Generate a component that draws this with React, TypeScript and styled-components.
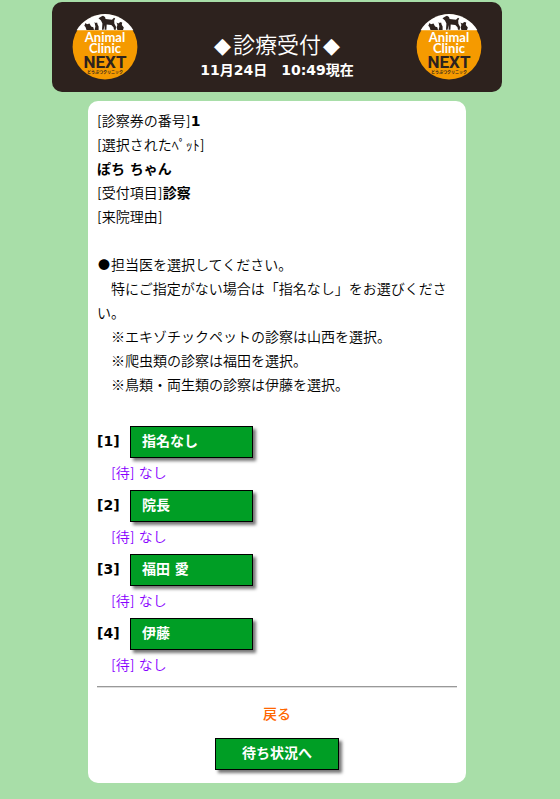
import React from "react";
import styled, { createGlobalStyle } from "styled-components";

const GlobalStyle = createGlobalStyle`
  body {
    margin: 0;
    padding: 2px 6px 16px 0;
    background: #a8dea8;
    color: #000;
    font-family: "DejaVu Sans", "Noto Sans CJK JP", sans-serif;
    font-size: 14px;
    line-height: 24px;
  }
`;

const Page = styled.div`
  max-width: 450px;
  margin: 0 auto;
`;

const Header = styled.header`
  display: flex;
  align-items: center;
  justify-content: space-between;
  padding: 12px 20px;
  border-radius: 10px;
  background: #2d221e;
  color: #fff;
  text-align: center;
`;

const Heading = styled.div`
  padding-top: 10px;
`;

const Title = styled.h1`
  margin: 0;
  font-family: "Noto Sans CJK JP", sans-serif;
  font-size: 22px;
  font-weight: 350;
  line-height: 32px;
`;

const Diamond = styled.span`
  display: inline-block;
  width: 20px;
  font-family: "DejaVu Sans", sans-serif;
`;

const Clock = styled.div`
  font-weight: bold;
  line-height: 16px;
`;

const LogoMark = styled.svg`
  display: block;
  flex: none;
  width: 66px;
  height: 66px;
`;

const Card = styled.main`
  box-sizing: border-box;
  width: 84%;
  margin: 9px auto 0;
  padding: 8px 9px 13px;
  border-radius: 10px;
  background: #fff;
`;

const Details = styled.dl`
  margin: 0 0 24px;
`;

const DetailLine = styled.div`
  display: flex;
  flex-wrap: wrap;
`;

const Term = styled.dt`
  font-family: Inter, "Noto Sans CJK JP", sans-serif;
  font-weight: 350;
`;

const Value = styled.dd<{ $ownLine?: boolean }>`
  margin: 0;
  font-weight: bold;
  flex-basis: ${(p) => (p.$ownLine ? "100%" : "auto")};
`;

const Notice = styled.div`
  margin-bottom: 29px;
  font-family: Inter, "Noto Sans CJK JP", sans-serif;
  font-weight: 350;
`;

const NoticeLine = styled.p`
  margin: 0;
`;

const Bullet = styled.span`
  display: inline-block;
  width: 14px;
  font-family: "Noto Sans CJK JP", sans-serif;
  font-size: 12px;
  line-height: 16px;
  text-align: center;
`;

const ReferenceMark = styled.span`
  font-family: "Noto Sans CJK JP", sans-serif;
  line-height: 16px;
`;

const DoctorList = styled.ol`
  margin: 0;
  padding: 0;
  list-style: none;
`;

const DoctorItem = styled.li`
  padding-bottom: 5px;
`;

const DoctorRow = styled.div`
  display: grid;
  grid-template-columns: 24px 123px;
  column-gap: 9px;
  align-items: center;
`;

const Index = styled.label`
  padding-bottom: 2px;
  font-weight: bold;
  white-space: nowrap;
`;

const GreenButton = styled.button<{ $centered?: boolean }>`
  box-sizing: border-box;
  width: ${(p) => (p.$centered ? "124px" : "123px")};
  height: 32px;
  padding: 0 11px 2px;
  border: 1px solid #000;
  background: #009e25;
  box-shadow: 3px 3px 3px #777;
  color: #fff;
  font: inherit;
  font-weight: bold;
  text-align: ${(p) => (p.$centered ? "center" : "left")};
  cursor: pointer;
`;

const Waiting = styled.div`
  margin-top: 3px;
  padding-left: 14px;
  color: #8800ff;
  font-family: Inter, "Noto Sans CJK JP", sans-serif;
  font-weight: 350;
`;

const Divider = styled.hr`
  height: 0;
  margin: 4px 0 14px;
  border: 0;
  border-top: 1px solid #999;
  border-bottom: 1px solid #ddd;
`;

const Footer = styled.footer`
  display: flex;
  flex-direction: column;
  align-items: center;
  gap: 12px;
`;

const BackLink = styled.a`
  color: #ff6600;
  font-weight: 500;
  text-decoration: none;
`;

const doctors = ["指名なし", "院長", "福田 愛", "伊藤"];

const remarks = [
  "エキゾチックペットの診察は山西を選択。",
  "爬虫類の診察は福田を選択。",
  "鳥類・両生類の診察は伊藤を選択。",
];

function Logo() {
  return (
    <LogoMark viewBox="0 0 66 66" role="img" aria-label="Animal Clinic NEXT">
      <circle cx="33" cy="33" r="32.4" fill="#f59a00" />
      <path d="M4.6 16.3A33 33 0 0 1 61.4 16.3Z" fill="#fff" />
      <g fill="#2d221e">
        <path d="M13.5 9l1.5 1.2L17.5 9.5l1.6 3 2.2.7.7 2.8h-7.5l-1-3-1.2-1.2z" />
        <path d="M22.5 8l1.2 1 1.4-.6.5 2.2 1 2V16h-4l.8-3.5z" />
        <path d="M26.5 4.2l2.8-1.6 1.7-.8 2 1.2.6 2 6.4.8 2-2 1.2.6-1 2.2.2 3.2 1.6 3-.2 3h-1.8l-.5-2.5-2.2-2.3-4.6-.6-.3 5.4h-1.8v-4.8l-1 4.8h-1.6l.4-6.2-1.4-3.1z" />
        <path d="M44.5 8.6l1.7.8 2.2-1.3 1.8.5-.4 2.4 2 2.5-.8 2.5h-5.6l-.8-2.6.8-2.4z" />
      </g>
      <text textAnchor="middle" fontFamily="Lato, sans-serif" fontWeight="700">
        <tspan x="33" y="28" fill="#fff" fontSize="13">Animal</tspan>
        <tspan x="33" y="39" fill="#fff" fontSize="13">Clinic</tspan>
        <tspan x="33" y="54" fill="#2d221e" fontSize="17" fontFamily="Roboto, sans-serif">NEXT</tspan>
        <tspan x="33" y="60" fill="#2d221e" fontSize="4" fontFamily="Noto Sans CJK JP, sans-serif">
          どうぶつクリニック
        </tspan>
      </text>
    </LogoMark>
  );
}

export default function App() {
  return (
    <>
      <GlobalStyle />
      <Page>
        <Header>
          <Logo />
          <Heading>
            <Title>
              <Diamond>◆</Diamond>診療受付<Diamond>◆</Diamond>
            </Title>
            <Clock>11月24日　10:49現在</Clock>
          </Heading>
          <Logo />
        </Header>
        <Card>
          <Details>
            <DetailLine>
              <Term>[診察券の番号]</Term>
              <Value>1</Value>
            </DetailLine>
            <DetailLine>
              <Term>[選択されたﾍﾟｯﾄ]</Term>
              <Value $ownLine>ぽち ちゃん</Value>
            </DetailLine>
            <DetailLine>
              <Term>[受付項目]</Term>
              <Value>診察</Value>
            </DetailLine>
            <DetailLine>
              <Term>[来院理由]</Term>
            </DetailLine>
          </Details>
          <Notice>
            <NoticeLine>
              <Bullet>●</Bullet>担当医を選択してください。
            </NoticeLine>
            <NoticeLine>　特にご指定がない場合は「指名なし」をお選びください。</NoticeLine>
            {remarks.map((remark) => (
              <NoticeLine key={remark}>
                <ReferenceMark>{"　※"}</ReferenceMark>
                {remark}
              </NoticeLine>
            ))}
          </Notice>
          <DoctorList>
            {doctors.map((name, i) => (
              <DoctorItem key={name}>
                <DoctorRow>
                  <Index htmlFor={`doctor-${i + 1}`}>[{i + 1}]</Index>
                  <GreenButton type="button" id={`doctor-${i + 1}`}>
                    {name}
                  </GreenButton>
                </DoctorRow>
                <Waiting>[待] なし</Waiting>
              </DoctorItem>
            ))}
          </DoctorList>
          <Divider />
          <Footer>
            <BackLink href="#back">戻る</BackLink>
            <GreenButton type="button" $centered>
              待ち状況へ
            </GreenButton>
          </Footer>
        </Card>
      </Page>
    </>
  );
}
